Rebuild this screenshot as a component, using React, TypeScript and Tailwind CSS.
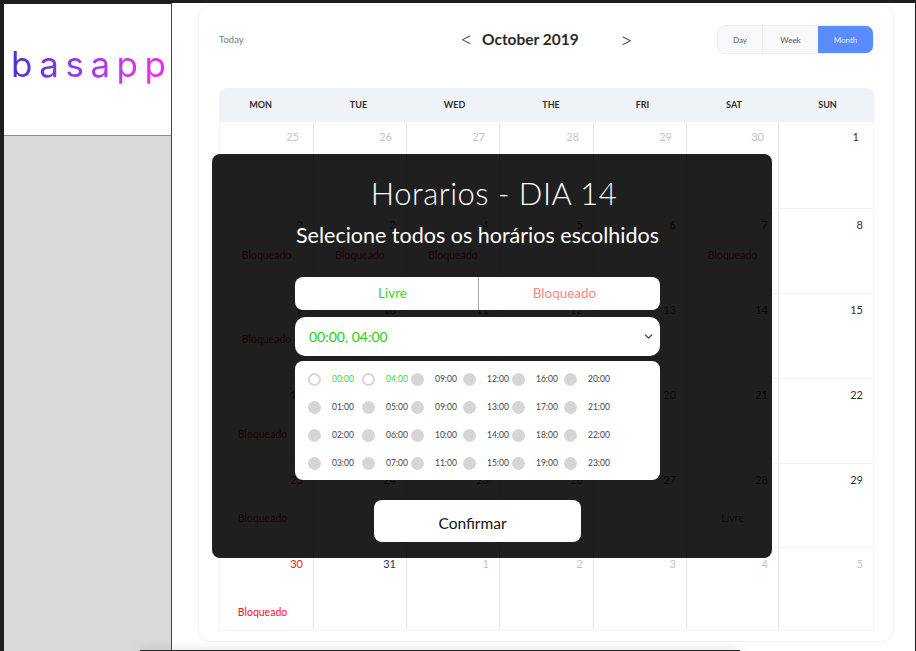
import { useState } from 'react';
import { ChevronDown } from 'lucide-react';

type Tone = 'muted' | 'dark' | 'red' | 'green';

type Day = {
  n: number;
  tone: Tone;
  note?: 'Bloqueado' | 'Livre';
};

const toneClass: Record<Tone, string> = {
  muted: 'text-[#c4c4c4]',
  dark: 'text-[#333333]',
  red: 'text-[#ff1220]',
  green: 'text-[#1f9a1f]',
};

const weekdays = [
  { label: 'MON', cls: 'pr-3' },
  { label: 'TUE', cls: 'pr-1' },
  { label: 'WED', cls: 'pl-0.5' },
  { label: 'THE', cls: 'pl-2' },
  { label: 'FRI', cls: 'pl-1' },
  { label: 'SAT', cls: 'pl-0.5' },
  { label: 'SUN', cls: 'pl-0.5' },
];

const rows: { height: string; cell: string; num: string; note: string; blocked: string; days: Day[] }[] = [
  {
    height: 'h-[87px]',
    cell: 'pt-[7px]',
    num: 'pr-[14px]',
    note: 'mt-[20px]',
    blocked: '',
    days: [
      { n: 25, tone: 'muted' },
      { n: 26, tone: 'muted' },
      { n: 27, tone: 'muted' },
      { n: 28, tone: 'muted' },
      { n: 29, tone: 'muted' },
      { n: 30, tone: 'muted' },
      { n: 1, tone: 'dark' },
    ],
  },
  {
    height: 'h-[85px]',
    cell: 'pt-[8px]',
    num: 'pr-[10px]',
    note: 'mt-[15px]',
    blocked: '',
    days: [
      { n: 2, tone: 'red', note: 'Bloqueado' },
      { n: 3, tone: 'red', note: 'Bloqueado' },
      { n: 4, tone: 'red', note: 'Bloqueado' },
      { n: 5, tone: 'dark' },
      { n: 6, tone: 'dark' },
      { n: 7, tone: 'red', note: 'Bloqueado' },
      { n: 8, tone: 'dark' },
    ],
  },
  {
    height: 'h-[85px]',
    cell: 'pt-[8px]',
    num: 'pr-[10px]',
    note: 'mt-[14px]',
    blocked: '',
    days: [
      { n: 9, tone: 'red', note: 'Bloqueado' },
      { n: 10, tone: 'dark' },
      { n: 11, tone: 'dark' },
      { n: 12, tone: 'red' },
      { n: 13, tone: 'green' },
      { n: 14, tone: 'dark' },
      { n: 15, tone: 'dark' },
    ],
  },
  {
    height: 'h-[85px]',
    cell: 'pt-[8px]',
    num: 'pr-[10px]',
    note: 'mt-[24px]',
    blocked: 'pr-2',
    days: [
      { n: 16, tone: 'red', note: 'Bloqueado' },
      { n: 17, tone: 'dark' },
      { n: 18, tone: 'dark' },
      { n: 19, tone: 'dark' },
      { n: 20, tone: 'green' },
      { n: 21, tone: 'dark' },
      { n: 22, tone: 'dark' },
    ],
  },
  {
    height: 'h-[84px]',
    cell: 'pt-[8px]',
    num: 'pr-[10px]',
    note: 'mt-[23px]',
    blocked: 'pr-2',
    days: [
      { n: 23, tone: 'red', note: 'Bloqueado' },
      { n: 24, tone: 'dark' },
      { n: 25, tone: 'dark' },
      { n: 26, tone: 'green' },
      { n: 27, tone: 'dark' },
      { n: 28, tone: 'green', note: 'Livre' },
      { n: 29, tone: 'dark' },
    ],
  },
  {
    height: 'h-[83px]',
    cell: 'pt-[8px]',
    num: 'pr-[10px]',
    note: 'mt-[33px]',
    blocked: 'pr-2',
    days: [
      { n: 30, tone: 'red', note: 'Bloqueado' },
      { n: 31, tone: 'dark' },
      { n: 1, tone: 'muted' },
      { n: 2, tone: 'muted' },
      { n: 3, tone: 'muted' },
      { n: 4, tone: 'muted' },
      { n: 5, tone: 'muted' },
    ],
  },
];

const gridCols = 'grid grid-cols-[95px_93px_93px_94px_93px_92px_95px]';

const hours = [
  ['00:00', '01:00', '02:00', '03:00'],
  ['04:00', '05:00', '06:00', '07:00'],
  ['09:00', '09:00', '10:00', '11:00'],
  ['12:00', '13:00', '14:00', '15:00'],
  ['16:00', '17:00', '18:00', '19:00'],
  ['20:00', '21:00', '22:00', '23:00'],
];

const slots = [0, 1, 2, 3].flatMap((row) => hours.map((col) => col[row]));

function Calendar() {
  return (
    <div className="mt-[2px] ml-[26px] h-[637px] w-[696px] rounded-xl border border-[#f1f2f4] bg-white pr-[19px] pl-5">
      {/* Toolbar */}
      <div className="flex h-[82px] items-start">
        <span className="mt-[27px] w-[241px] shrink-0 text-[9.5px] text-[#7b7b7b]">Today</span>
        <div className="mt-[20px] flex w-[257px] shrink-0 items-center">
          <span className="w-[11px] text-[22px] leading-[24px] font-light text-[#444444]">&lt;</span>
          <span className="ml-[11px] w-[138px] text-[15.5px] leading-[24px] font-bold text-[#2b2b2b]">
            October 2019
          </span>
          <span className="mt-[2px] text-[22px] leading-[24px] font-light text-[#444444]">&gt;</span>
        </div>
        <div className="mt-[19px] flex h-[29px] w-[157px] shrink-0 overflow-hidden rounded-lg border border-[#eef0f3] bg-[#f8f9fb] text-[8px] text-[#555555]">
          <span className="flex w-[45px] items-center justify-center border-r border-[#e9eaee]">Day</span>
          <span className="flex w-[55px] items-center justify-center">Week</span>
          <span className="flex flex-1 items-center justify-center bg-[#5b8cff] text-[#e6edff]">Month</span>
        </div>
      </div>

      {/* Weekday header */}
      <div className={`${gridCols} h-[34px] items-center rounded-t-lg bg-[#eff2f7] text-[9px] font-bold text-[#2e2e2e]`}>
        {weekdays.map((d) => (
          <span key={d.label} className={`text-center ${d.cls}`}>
            {d.label}
          </span>
        ))}
      </div>

      {/* Weeks */}
      {rows.map((row, i) => (
        <div key={i} className={`${gridCols} ${row.height} border-b border-[#f2f2f2]`}>
          {row.days.map((day, j) => (
            <div
              key={j}
              className={`flex flex-col border-r border-[#e6e6e6] first:border-l first:border-l-[#f4f4f4] last:border-r-[#f4f4f4] ${row.cell}`}
            >
              <span className={`text-right text-[11px] leading-[16px] ${row.num} ${toneClass[day.tone]}`}>{day.n}</span>
              {day.note && (
                <span
                  className={`text-center text-[10.5px] leading-[14px] ${row.note} ${
                    day.note === 'Livre' ? 'text-[#1f9a1f]' : `text-[#ff1220] ${row.blocked}`
                  }`}
                >
                  {day.note}
                </span>
              )}
            </div>
          ))}
        </div>
      ))}
    </div>
  );
}

function HorariosModal() {
  const [selected] = useState(['00:00', '04:00']);
  return (
    <div className="absolute top-[154px] left-[212px] h-[404px] w-[560px] rounded-lg bg-black/[0.88]">
      <h1 className="mt-[21px] pl-[4px] text-center text-[31px] leading-[36px] font-light tracking-[0.5px] text-white">
        Horarios - DIA 14
      </h1>
      <div className="ml-[83px] w-[365px]">
        <p className="mt-[10px] text-center text-[21.5px] leading-[28px] font-normal whitespace-nowrap text-white">
          Selecione todos os horários escolhidos
        </p>

        <div className="mt-[28px] flex h-[33px] items-center rounded-lg bg-white text-[13.5px]">
          <span className="flex h-full w-[184px] items-center justify-center border-r border-[#aaaaaa] pl-[12px] text-[#41d02c]">
            Livre
          </span>
          <span className="flex flex-1 items-center justify-center pr-[10px] text-[#ff8585]">Bloqueado</span>
        </div>

        <div className="mt-[7px] flex h-[39px] items-center justify-between rounded-[10px] bg-white pr-[5px] pl-[14px]">
          <span className="text-[14px] text-[#2ccb0f]">{selected.join(', ')}</span>
          <ChevronDown className="h-[13px] w-[13px] text-[#33384a]" strokeWidth={2.5} />
        </div>

        <div className="mt-[5px] grid h-[119px] grid-cols-[54px_49px_52px_49px_52px_1fr] content-start rounded-lg bg-white pt-[4px] pl-[13px]">
          {slots.map((slot, i) => {
            const on = i < 2 && selected.includes(slot);
            return (
              <div key={i} className="flex h-[28px] items-center gap-[11px]">
                <span
                  className={`h-[13px] w-[13px] shrink-0 rounded-full ${
                    on ? 'border-2 border-[#d6d6d6] bg-white' : 'bg-[#d6d6d6]'
                  }`}
                />
                <span className={`text-[8.5px] ${on ? 'text-[#45d62c]' : 'text-[#444444]'}`}>{slot}</span>
              </div>
            );
          })}
        </div>

        <button className="mt-[20px] ml-[79px] flex h-[42px] w-[207px] items-center justify-center rounded-lg bg-white pt-[5px] pr-[10px] text-[15.5px] text-[#111111]">
          Confirmar
        </button>
      </div>
    </div>
  );
}

export default function App() {
  return (
    <div className="relative h-[651px] w-[916px] overflow-hidden bg-[#1e1e1e] font-['Lato',sans-serif]">
      <div className="flex h-[648px] w-[915px] translate-y-[3px]">
        <aside className="ml-[4px] flex w-[168px] shrink-0 flex-col border-r border-[#444444] pt-[1px]">
          <div className="flex h-[132px] items-center border-b border-[#8c8c8c] bg-white pl-[7px]">
            <span className="bg-gradient-to-r from-[#4a2fd8] to-[#ff1ff0] bg-clip-text pb-[12px] font-['Inter',sans-serif] text-[35px] leading-[44px] font-normal tracking-[6.5px] text-transparent">
              basapp
            </span>
          </div>
          <div className="flex-1 bg-[#d9d9d9]" />
        </aside>
        <main className="flex-1 bg-white">
          <Calendar />
        </main>
      </div>
      <HorariosModal />
      {/* strip of the next window peeking in at the bottom */}
      <div className="absolute bottom-0 left-[140px] h-[1px] w-[600px] bg-[#2a2a2a] shadow-[0_0_8px_rgba(0,0,0,0.5)]" />
    </div>
  );
}
